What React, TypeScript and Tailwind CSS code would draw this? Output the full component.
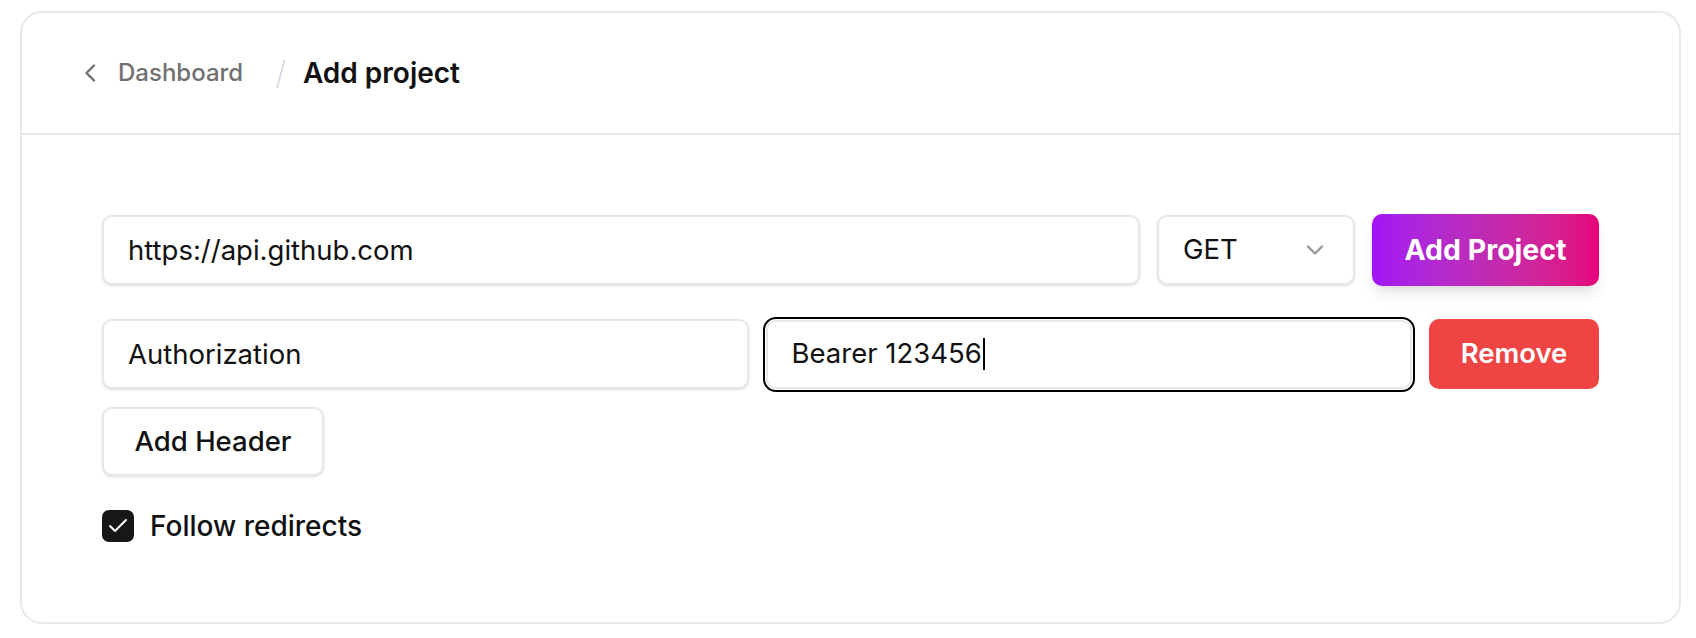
import { Check, ChevronDown } from 'lucide-react';

const font = { fontFamily: 'Inter, "Noto Sans", sans-serif' };

function TextField({ value, className = '' }: { value: string; className?: string }) {
  return (
    <input
      readOnly
      value={value}
      className={`h-[70px] rounded-[10px] border-2 border-[#e7e7e7] bg-white px-6 text-[27.5px] text-[#111] shadow-sm outline-none ${className}`}
    />
  );
}

export default function App() {
  return (
    <div className="min-h-screen bg-white pl-[20px] pr-[15px] pt-[11px] pb-[14px]" style={font}>
      <div className="rounded-[22px] border-2 border-[#e8e8ea] bg-white">
        {/* Breadcrumb */}
        <div className="flex h-[122px] items-center border-b-2 border-[#e8e8ea] pl-[62px]">
          <svg width="12" height="18" viewBox="0 0 12 18" fill="none" className="mr-[22px]">
            <path d="M10 1.5 2.5 9l7.5 7.5" stroke="#707070" strokeWidth="2.4" strokeLinecap="round" strokeLinejoin="round" />
          </svg>
          <span className="text-[24px] font-medium text-[#707070]">Dashboard</span>
          <span className="ml-[32px] mr-[17px] text-[32px] font-extralight text-[#cfd0d4]">/</span>
          <span className="text-[28px] font-semibold text-[#111]">Add project</span>
        </div>

        {/* Form */}
        <div className="px-[80px] pt-[80px] pb-[80px]">
          <div className="flex gap-[17px]">
            <TextField value="https://api.github.com" className="flex-1" />
            <div className="flex h-[70px] w-[198px] items-center justify-between rounded-[10px] border-2 border-[#e7e7e7] bg-white pl-6 pr-6 text-[27.5px] text-[#111] shadow-sm">
              <span>GET</span>
              <ChevronDown size={28} strokeWidth={2} className="text-[#999]" />
            </div>
            <button className="h-[72px] w-[227px] -mt-px rounded-[10px] bg-gradient-to-r from-[#a213f5] via-[#c02bb3] to-[#e4007a] text-[28.5px] font-bold text-white shadow-lg shadow-black/10">
              Add Project
            </button>
          </div>

          <div className="mt-[33px] flex items-center gap-[17px]">
            <TextField value="Authorization" className="flex-1" />
            <div className="flex h-[69px] flex-1 items-center rounded-[10px] border-2 border-[#e7e7e7] bg-white px-6 text-[27.5px] text-[#111] outline-2 outline-offset-1 outline-black">
              <span>Bearer 123456</span>
              <span className="ml-px h-[32px] w-[2px] bg-black" />
            </div>
            <button className="h-[70px] w-[170px] rounded-[10px] bg-[#ef4444] text-[27.5px] font-semibold text-white">
              Remove
            </button>
          </div>

          <button className="mt-[18px] h-[69px] w-[222px] rounded-[10px] border-2 border-[#e7e7e7] bg-white text-[27.5px] font-medium text-[#111] shadow-sm">
            Add Header
          </button>

          <label className="mt-[34px] flex h-8 items-center gap-4">
            <span className="flex h-8 w-8 items-center justify-center rounded-[7px] bg-[#171717]">
              <Check size={24} strokeWidth={2} className="text-white" />
            </span>
            <span className="text-[28px] font-medium leading-8 text-[#111]">Follow redirects</span>
          </label>
        </div>
      </div>
    </div>
  );
}
